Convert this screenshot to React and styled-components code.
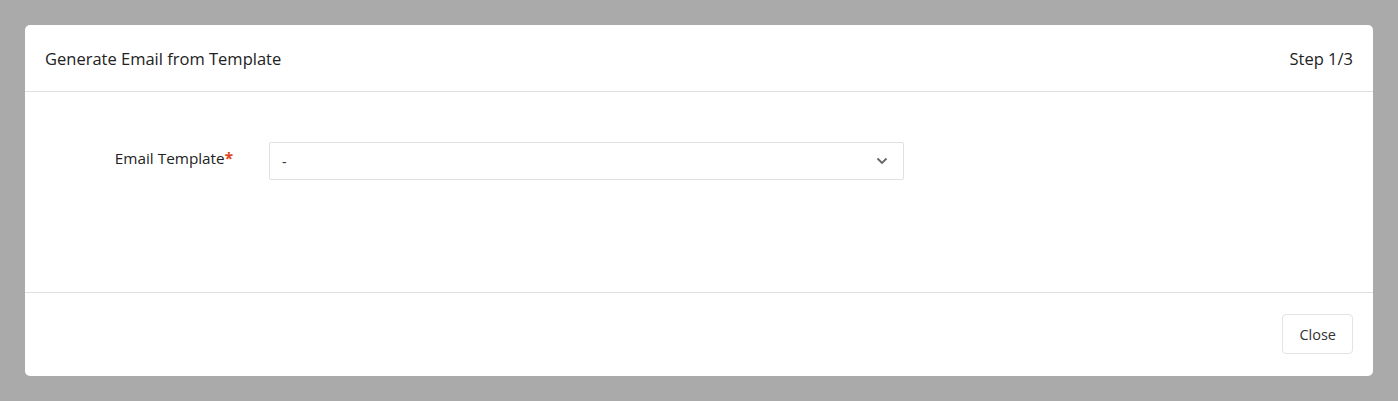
import React from 'react';
import styled, { createGlobalStyle } from 'styled-components';

const GlobalStyle = createGlobalStyle`
  html, body {
    margin: 0;
    padding: 0;
    background: #aaaaaa;
    font-family: "Open Sans", "Noto Sans", "Liberation Sans", sans-serif;
  }
`;

const Backdrop = styled.div`
  width: 1398px;
  height: 401px;
  box-sizing: border-box;
  padding: 25px 25px;
  background: #aaaaaa;
`;

const Modal = styled.div`
  background: #fff;
  border-radius: 5px;
  height: 351px;
  display: flex;
  flex-direction: column;
`;

const Header = styled.div`
  height: 67px;
  box-sizing: border-box;
  padding: 0 20px;
  display: flex;
  align-items: center;
  justify-content: space-between;
  border-bottom: 1px solid #e0e0e0;
  font-size: 16.5px;
  color: #222;
`;

const Body = styled.div`
  height: 201px;
  box-sizing: border-box;
  padding: 50px 20px 0;
  border-bottom: 1px solid #e0e0e0;
`;

const Row = styled.div`
  display: flex;
  align-items: center;
  gap: 36px;
`;

const Label = styled.label`
  width: 188px;
  text-align: right;
  font-size: 15.3px;
  color: #222;
  margin-top: -6px;
`;

const Required = styled.span`
  color: #e0421b;
  font-weight: bold;
`;

const Select = styled.div`
  width: 635px;
  height: 38px;
  box-sizing: border-box;
  border: 1px solid #e0e0e0;
  border-radius: 2px;
  display: flex;
  align-items: center;
  justify-content: space-between;
  padding: 0 15px 0 12px;
  font-size: 14px;
  color: #333;
`;

const Footer = styled.div`
  flex: 1;
  display: flex;
  align-items: flex-end;
  justify-content: flex-end;
  padding: 0 20px 22px;
`;

const Button = styled.button`
  height: 40px;
  padding: 0 16px;
  background: #fff;
  border: 1px solid #e3e3e3;
  border-radius: 4px;
  font-family: inherit;
  font-size: 14.5px;
  color: #333;
`;

const Chevron = () => (
  <svg width="12" height="8" viewBox="0 0 12 8">
    <path d="M1.5 1.5 L6 6 L10.5 1.5" fill="none" stroke="#666" strokeWidth="1.8" />
  </svg>
);

export default function App() {
  return (
    <>
      <GlobalStyle />
      <Backdrop>
        <Modal>
          <Header>
            <span>Generate Email from Template</span>
            <span>Step 1/3</span>
          </Header>
          <Body>
            <Row>
              <Label>Email Template<Required>*</Required></Label>
              <Select>
                <span>-</span>
                <Chevron />
              </Select>
            </Row>
          </Body>
          <Footer>
            <Button>Close</Button>
          </Footer>
        </Modal>
      </Backdrop>
    </>
  );
}
